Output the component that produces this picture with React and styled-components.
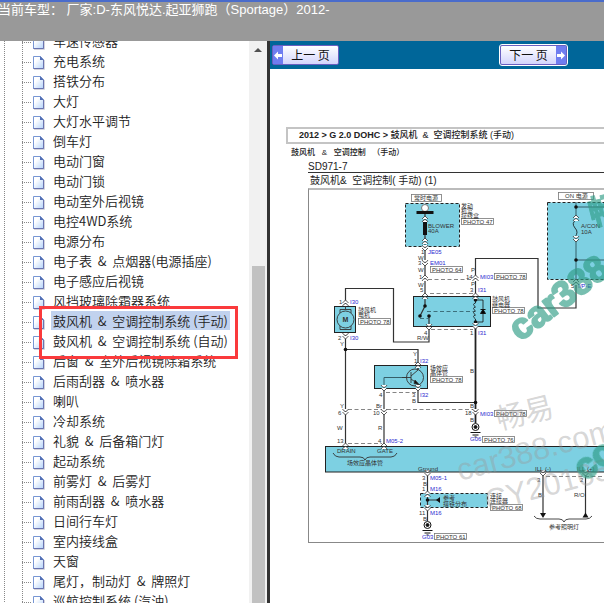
import React from 'react'
import styled, { createGlobalStyle } from 'styled-components'

const before = [
    '车速传感器', '充电系统', '搭铁分布', '大灯', '大灯水平调节', '倒车灯', '电动门窗',
    '电动门锁', '电动室外后视镜', '电控4WD系统', '电源分布', '电子表  &  点烟器(电源插座)',
    '电子感应后视镜', '风挡玻璃除霜器系统',
]
const marked = ['鼓风机  &  空调控制系统 (手动)', '鼓风机  &  空调控制系统 (自动)']
const after = [
    '后窗  &  室外后视镜除霜系统', '后雨刮器  &  喷水器', '喇叭', '冷却系统',
    '礼貌  &  后备箱门灯', '起动系统', '前雾灯  &  后雾灯', '前雨刮器  &  喷水器', '日间行车灯',
    '室内接线盒', '天窗', '尾灯，制动灯  &  牌照灯', '巡航控制系统 (汽油)',
]

export default function App() {
    return (
        <Page>
            <GlobalStyle />
            <Header>当前车型： 厂家:D-东风悦达.起亚狮跑（Sportage）2012-</Header>
            <Content>
                <Sidebar>
                    <Tree>
                        {before.map((name) => <TreeItem key={name} name={name} />)}
                        <MarkedGroup>
                            <List>
                                {marked.map((name, i) => <TreeItem key={name} name={name} selected={i === 0} />)}
                            </List>
                        </MarkedGroup>
                        {after.map((name) => <TreeItem key={name} name={name} />)}
                    </Tree>
                    <Scrollbar aria-hidden="true">
                        <ScrollArrow />
                        <ScrollThumb />
                    </Scrollbar>
                </Sidebar>
                <Main>
                    <Toolbar>
                        <PageButton type="button">
                            <Arrow><ArrowIcon left /></Arrow>
                            <span>上一 页</span>
                        </PageButton>
                        <PageButton type="button" $outlined>
                            <span>下一 页</span>
                            <Arrow><ArrowIcon /></Arrow>
                        </PageButton>
                    </Toolbar>
                    <Article>
                        <Breadcrumb>
                            2012 &gt; G 2.0 DOHC &gt; <b>鼓风机  &amp;  空调控制系统 (手动)</b>
                        </Breadcrumb>
                        <Subtitle>鼓风机   &amp;   空调控制   （手动）</Subtitle>
                        <Sheet>
                            <SheetCode>SD971-7</SheetCode>
                            <SheetTitle>鼓风机&amp;  空调控制( 手动) (1)</SheetTitle>
                            <Figure><Diagram /></Figure>
                        </Sheet>
                    </Article>
                </Main>
            </Content>
        </Page>
    )
}

function TreeItem({ name, selected }) {
    return (
        <Item>
            <Guide />
            <Branch />
            <DocIcon />
            <ItemLink href="#" $selected={selected}>{name}</ItemLink>
        </Item>
    )
}

function DocIcon() {
    return (
        <svg width="16" height="19" viewBox="0 -1 16 19" aria-hidden="true">
            <defs>
                <linearGradient id="sheet" x1="0" y1="0" x2="1" y2="1">
                    <stop offset="0.3" stopColor="#fff" />
                    <stop offset="1" stopColor="#b4d3fa" />
                </linearGradient>
            </defs>
            <path d="M2 17.5h10.500V8" stroke="#d4d4dc" fill="none" />
            <path d="M1.500 4.500h7l3 3.500v8.500h-10z" fill="url(#sheet)" stroke="#7796d4" />
            <path d="M1.500 16.500h10V8" fill="none" stroke="#6a74b0" />
            <path d="M8 4l4 4h-4z" fill="#5470b4" />
        </svg>
    )
}

function ArrowIcon({ left }) {
    return (
        <svg width="8" height="9" viewBox="0 0 8 9" aria-hidden="true">
            <path
                d={left ? 'M0 4.500L4 .5V3H8V6H4V8.500z' : 'M8 4.500L4 .5V3H0V6H4V8.500z'}
                fill="#fff"
            />
        </svg>
    )
}

// connector plug, opens up or down
function Plug({ x, y, down }) {
    const s = down ? 1 : -1
    return (
        <path
            d={`M${x - 3} ${y - s}l3 ${s * 3}l3 ${-s * 3}M${x - 3} ${y - s * 4}q3 ${s * 5} 6 0`}
            fill="#fff" stroke="#333" strokeWidth="0.8"
        />
    )
}

function Photo({ x, y, n }) {
    return (
        <g>
            <rect x={x + 0.5} y={y + 0.5} width="32" height="6" fill="#fff" stroke="#777" strokeWidth="0.8" />
            <text x={x + 2} y={y + 6}>PHOTO {n}</text>
        </g>
    )
}

function Ground({ x, y }) {
    return (
        <g stroke="#111" fill="none">
            <circle cx={x} cy={y} r="3.5" />
            <circle cx={x} cy={y} r="1.500" fill="#111" />
            <path d={`M${x - 5} ${y + 5.5}h10M${x - 3} ${y + 8}h6M${x - 1} ${y + 10}h2`} />
        </g>
    )
}

const wireLabels = [
    [421, 254, '1'], [418, 260, 'W'], [418, 265, '3'], [418, 272, 'W'], [419, 279, '1'], [418, 287, 'W'], [420, 292, '5'],
    [471, 272, 'P'], [466, 279, '14'], [471, 286, 'P'], [470, 292, '3'], [571, 288, '5'],
    [339, 304, '1'], [338, 340, '2'], [340, 346, 'Y'], [413, 356, 'Y'], [414, 363, '1'],
    [379, 397, '4'], [412, 397, '3'], [412, 403, 'B'], [340, 408, 'Y'], [338, 415, '6'],
    [376, 408, 'Br'], [373, 415, '10'], [337, 430, 'W'], [378, 430, 'R'], [337, 443, '13'], [378, 443, '4'],
    [424, 335, '4'], [417, 340, 'R/W'], [470, 335, '1'], [470, 373, 'B'], [470, 408, 'B'], [465, 415, '18'],
    [470, 422, 'B'], [422, 480, '3'], [423, 486, 'B'], [422, 491, '1'], [419, 515, '11'], [423, 521, 'B'],
    [537, 482, '3'], [538, 497, 'B'], [580, 482, '2'], [574, 497, 'R/O'],
]

const plugLabels = [
    [428, 254, 'JE05'], [430, 265, 'EM01'], [480, 279, 'MI03'], [478, 292, 'I31'], [578, 288, 'I/P-E'],
    [350, 304, 'I30'], [350, 340, 'I30'], [420, 363, 'I32'], [420, 397, 'I32'], [386, 443, 'M05-2'],
    [478, 335, 'I31'], [480, 416, 'MI03'], [470, 441, 'G06'], [430, 480, 'M05-1'], [430, 491, 'M16'],
    [430, 515, 'M16'], [422, 539, 'G03'],
]

const notes = [
    [414, 200, '常时电源'], [461, 208, '发动'], [461, 213, '机室'], [461, 218, '接线盒'],
    [492, 301, '鼓风机'], [492, 307, '继电器'], [358, 312, '鼓风机'], [358, 317, '电机'],
    [430, 370, '场效应'], [430, 375, '晶体管'], [347, 465, '场效应晶体管'],
    [443, 500, '参考'], [443, 506, '搭铁分布'], [490, 498, '连接'], [490, 503, '连接器'],
    [549, 529, '参考照明灯'], [565, 198, 'ON 电源'],
]

const photos = [
    [430, 266, 64], [461, 218, 47], [494, 273, 78], [492, 307, 78], [358, 318, 78], [430, 376, 78],
    [494, 410, 78], [482, 436, 76], [490, 504, 68], [434, 533, 61],
]

const joints = [
    [425, 306], [420, 316], [429, 316], [475.5, 300], [475.5, 322],
    [345.5, 349.5], [475.5, 402.5], [576, 207], [576, 260], [427.5, 500],
]

function Diagram() {
    return (
        <Drawing width="296" height="352" viewBox="309 190 296 352" role="img" aria-label="鼓风机 & 空调控制系统 (手动)">
            {/* blocks */}
            <g fill="#7dd0e2" stroke="#222" strokeWidth="1">
                <rect x="405.5" y="203.500" width="54" height="43" strokeDasharray="3 2" />
                <rect x="547.500" y="202.500" width="62" height="77" strokeDasharray="3 2" />
                <rect x="413.500" y="296.500" width="77" height="30" />
                <rect x="334.500" y="306.500" width="21" height="26" />
                <rect x="374.500" y="365.500" width="53" height="23" />
                <rect x="325.500" y="446.500" width="290" height="25.500" />
                <rect x="420.500" y="493.500" width="67" height="14" strokeDasharray="3 2" />
            </g>
            <g fill="#fff" stroke="#777" strokeWidth="0.8">
                <rect x="411.500" y="194.500" width="30" height="7" />
                <rect x="558.500" y="192.500" width="35" height="7" />
            </g>

            {/* wires */}
            <g fill="none" stroke="#333" strokeWidth="1.200">
                <path d="M425 211V306L420 316M429 316V342H393.500V288.500H345.500V306M345.500 333V446" />
                <path d="M345.500 349.500H418V370M418 383V402.500H475.500M384 388V446" />
                <path d="M475.500 296V258.500H538V308H576V280" />
                <path d="M427.500 472V521M427.500 500H438M543 472V514M585.500 472V514" />
                <path d="M576 280V202M576 207H606M576 260H606M384 388V377.500H410" stroke="#355f69" strokeWidth="1" />
            </g>
            <path d="M475.500 326V423" stroke="#222" strokeWidth="1.800" />
            <g fill="none" stroke="#777" strokeWidth="0.900" strokeDasharray="4 2.500">
                <path d="M428 279.500H473M430 293.500H473M431 329.500H473M348 409.500H473M386 392.500H416" />
                <path d="M348 443.500H382M546 476.500H606" />
                <path d="M427 311.500H474M420 318.500H429" stroke="#356571" />
            </g>

            {/* blower fuse, relay, motor */}
            <g stroke="#111">
                <circle cx="425" cy="208" r="3.500" fill="#fff" stroke="#777" />
                <path d="M416.500 212.500H433.500" strokeWidth="3" />
                <path d="M425 220V235" strokeWidth="4" />
                <path d="M576 221V236" stroke="#7dd0e2" strokeWidth="3" />
                <path d="M576 220q-5 3 -1 8q4 4 0 9" fill="none" strokeWidth="0.800" />
                <path d="M475.500 300V303q-4 1 0 4q-4 1 0 4q-4 1 0 4q-4 1 0 4v4M475.500 300H483V322H475.500" fill="none" strokeWidth="0.800" />
                <path d="M480.500 313.500h5l-2.500 -4zM480.500 309.500h5" />
            </g>
            <g fill="#7dd0e2" stroke="#333" strokeWidth="0.900">
                <path d="M345.500 306V309M340 313V309.500H351V313M340 325V329.500H351V325" />
                <circle cx="345.500" cy="319.500" r="8.500" />
                <circle cx="415" cy="377.500" r="8.500" />
                <path d="M411 372V383M411 376L418 370V365M411 379L418 384V389M402 377.500H411" fill="none" />
                <path d="M415 380l4 4.500l-5 -1z" fill="#111" />
            </g>
            <g fill="#111">
                {joints.map(([x, y]) => <circle key={`${x}-${y}`} cx={x} cy={y} r="1.800" />)}
                <path d="M436 500l4 -3v6zM540 513h6l-3 5zM582.500 517.500h6l-3 -5z" />
            </g>

            <Plug x={425} y={218} /><Plug x={425} y={240} /><Plug x={425} y={249} down />
            <Plug x={425} y={264} down /><Plug x={425} y={277} /><Plug x={425} y={295} />
            <Plug x={475.5} y={277} /><Plug x={475.5} y={295} /><Plug x={429} y={328} down />
            <Plug x={475.5} y={327} down /><Plug x={345.5} y={302} /><Plug x={345.5} y={337} down />
            <Plug x={418} y={364} /><Plug x={384} y={389} down /><Plug x={418} y={389} down />
            <Plug x={345.5} y={413} down /><Plug x={384} y={413} down /><Plug x={475.5} y={413} down />
            <Plug x={345.5} y={445} /><Plug x={384} y={445} /><Plug x={427.5} y={474} down />
            <Plug x={427.5} y={493} /><Plug x={427.5} y={509} down /><Plug x={576} y={217} />
            <Plug x={576} y={240} down /><Plug x={576} y={281} /><Plug x={543} y={474} down />
            <Plug x={585.5} y={474} down />
            <Ground x={475.5} y={427} /><Ground x={427.5} y={525} />

            <g fill="none" stroke="#333" strokeWidth="0.900">
                <path d="M333 453q2 4 6 4H360q4 0 5 3q1 -3 5 -3H391q4 0 6 -4" />
                <path d="M534 516q2 3 6 3H559q4 0 5 3q1 -3 5 -3H586q4 0 6 -3" />
            </g>

            {/* labels */}
            <g fill="#333">
                {photos.map(([x, y, n]) => <Photo key={`${x}-${y}`} x={x} y={y} n={n} />)}
                {wireLabels.map(([x, y, t]) => <text key={`${x}-${y}`} x={x} y={y}>{t}</text>)}
                {notes.map(([x, y, t]) => <text key={`${x}-${y}`} x={x} y={y}>{t}</text>)}
                <text x="428" y="228">BLOWER</text>
                <text x="428" y="233">40A</text>
                <text x="581" y="228">A/CON</text>
                <text x="581" y="234">10A</text>
                <text x="342.500" y="322" fontSize="7" fontWeight="bold">M</text>
                <text x="337" y="453">DRAIN</text>
                <text x="377" y="453">GATE</text>
                <text x="418" y="471">Ground</text>
                <text x="535" y="471">ILL.(-)</text>
                <text x="577" y="471">ILL.(+)</text>
            </g>
            <g fill="#2b2bd0">
                {plugLabels.map(([x, y, t]) => <text key={`${x}-${y}`} x={x} y={y}>{t}</text>)}
            </g>

            {/* watermarks */}
            <g fill="#999" fillOpacity="0.4">
                <text fontSize="29" transform="translate(499 430) rotate(-14)">畅易</text>
                <text fontSize="31" transform="translate(460 481) rotate(-15)">car388.com</text>
                <text fontSize="31" transform="translate(488 512) rotate(-15)">CY20165</text>
            </g>
            <g fill="#2f9c85" stroke="#2f9c85" strokeWidth="2" strokeLinejoin="round" opacity="0.65" fontWeight="bold">
                <text fontSize="36" transform="translate(520 342) rotate(-37)">car388</text>
                <text fontSize="36" transform="translate(585 482) rotate(-37)">co</text>
                <text fontSize="34" strokeWidth="1" transform="translate(592 226) rotate(-14)">畅</text>
            </g>
        </Drawing>
    )
}

const GlobalStyle = createGlobalStyle`
*, *::before, *::after {
  box-sizing: border-box;
}
body {
  margin: 0;
  background: #fff;
  font-family: "Liberation Sans", "Noto Sans CJK SC", sans-serif;
}
`;

const Page = styled.div`
display: flex;
flex-direction: column;
height: 100vh;
overflow: hidden;
`;

const Header = styled.header`
flex: 0 0 41px;
border-top: 2px solid #4a6ccb;
background: #999;
color: #fff;
font-size: 13px;
line-height: 16px;
white-space: pre;
text-indent: -2px;
`;

const Content = styled.div`
display: flex;
flex: 1;
min-height: 0;
`;

const Sidebar = styled.nav`
display: flex;
flex: 0 0 270px;
overflow: hidden;
border-right: 3px solid #333;
`;

const List = styled.ul`
margin: 0;
padding: 0;
list-style: none;
`;

const Tree = styled(List)`
flex: 1;
min-width: 0;
margin-top: -10px;
`;

const Item = styled.li`
display: flex;
height: 20px;
`;

const dots = 'repeating-linear-gradient(#888 0 1px, transparent 1px 2px)';

const Guide = styled.span`
flex: 0 0 18px;
background: ${dots} 4px 0 / 1px 100% no-repeat;
`;

const Branch = styled.span`
flex: 0 0 14px;
background:
  ${dots} 4px 0 / 1px 100% no-repeat,
  repeating-linear-gradient(90deg, #888 0 1px, transparent 1px 2px) 4px 11px / 10px 1px no-repeat;
`;

const ItemLink = styled.a`
height: 19px;
margin-left: 3px;
padding: 0 2px;
background: ${(p) => (p.$selected ? '#c1d2ee' : 'transparent')};
color: #222;
font-family: "Noto Sans CJK SC", sans-serif;
font-size: 13px;
font-weight: 350;
line-height: 19px;
text-decoration: none;
white-space: pre;
`;

const MarkedGroup = styled.li`
position: relative;
list-style: none;
&::after {
  content: "";
  position: absolute;
  top: -5px;
  bottom: -8px;
  left: 39px;
  width: 199px;
  border: 3px solid #fa3a3c;
  pointer-events: none;
}
`;

const Scrollbar = styled.div`
display: flex;
flex: 0 0 18px;
flex-direction: column;
align-items: center;
padding-top: 7px;
background: #f1f1f1;
`;

const ScrollArrow = styled.span`
border: 4px solid transparent;
border-top: 0;
border-bottom: 4px solid #505050;
`;

const ScrollThumb = styled.span`
flex: 1;
width: 13px;
margin-top: 214px;
background: #c1c1c1;
`;

const Main = styled.main`
flex: 1;
min-width: 0;
overflow: hidden;
`;

const Toolbar = styled.div`
display: flex;
gap: 161px;
padding: 4px 2px;
height: 28px;
background: #069;
`;

const PageButton = styled.button`
display: flex;
align-items: center;
flex: none;
width: 67px;
height: 20px;
padding: 0;
border: 1px solid #6a5fc0;
border-radius: 2px;
outline: ${(p) => (p.$outlined ? '1px solid #fff' : 'none')};
background: linear-gradient(#fff, #d3d5fc);
color: #111;
font-family: "Noto Sans CJK SC", sans-serif;
font-size: 12px;
line-height: 16px;
span {
  flex: 1;
  white-space: nowrap;
}
`;

const Arrow = styled.i`
display: flex;
align-items: center;
justify-content: center;
width: 10px;
height: 100%;
background: #6f7df0;
`;

const Article = styled.article`
padding: 58px 0 0 16px;
color: #222;
`;

const Breadcrumb = styled.div`
height: 17px;
padding-left: 11px;
border: 2px solid #c4c4c4;
border-right: 0;
font-size: 9px;
font-weight: bold;
line-height: 13px;
white-space: nowrap;
b {
  font-weight: 500;
  white-space: pre;
}
`;

const Subtitle = styled.h2`
margin: 0;
padding: 2px 5px 0;
font-size: 8px;
font-weight: 500;
line-height: 14px;
white-space: pre;
`;

const Sheet = styled.section`
padding: 2px 0 0 22px;
`;

const SheetCode = styled.div`
height: 11px;
border-bottom: 1px solid #333;
font-size: 10px;
line-height: 10px;
`;

const SheetTitle = styled.h3`
margin: 0;
height: 15px;
padding-left: 2px;
font-size: 10px;
font-weight: normal;
line-height: 15px;
white-space: pre;
`;

const Figure = styled.figure`
display: flex;
margin: 0;
overflow: hidden;
border: 1px solid #888;
border-top: 2px solid #bbb;
border-right: 0;
`;

const Drawing = styled.svg`
flex: none;
font-family: "Liberation Sans", "Noto Sans CJK SC", sans-serif;
font-size: 6px;
`;
